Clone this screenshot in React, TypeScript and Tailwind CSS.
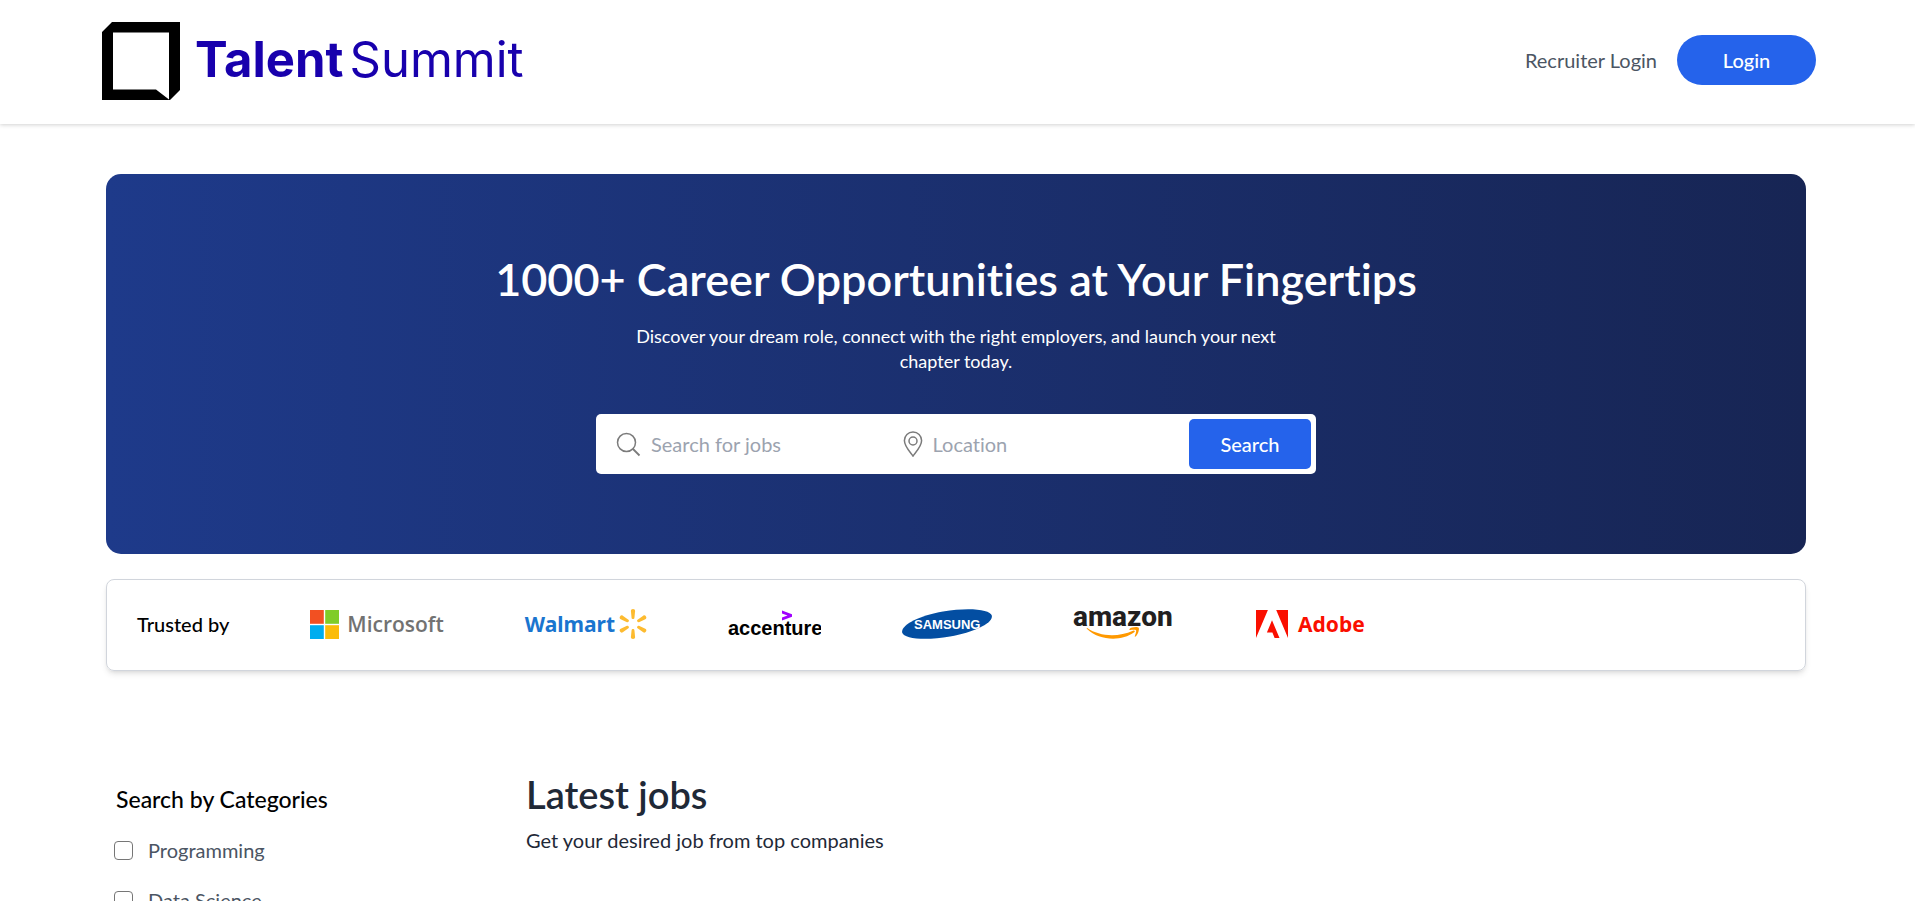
import React from "react";

const categories = ["Programming", "Data Science"];

function BrandMark() {
  return (
    <svg viewBox="0 0 78 78" className="size-[78px] shrink-0" aria-hidden="true">
      <path
        fillRule="evenodd"
        d="M10 0H78V68L68 78H0V10ZM11 10.500V67.500H54L67 77.500V10.500Z"
        fill="#000"
      />
    </svg>
  );
}

function SearchIcon() {
  return (
    <svg viewBox="0 0 25 25" className="size-[25px] shrink-0" fill="none" stroke="#7b7b7b" strokeWidth="1.500" aria-hidden="true">
      <circle cx="10.500" cy="10.500" r="9" />
      <path d="M17 17L23.500 23.500" strokeWidth="1.800" />
    </svg>
  );
}

function PinIcon() {
  return (
    <svg viewBox="0 0 20 26" className="h-[26px] w-5 shrink-0" fill="none" stroke="#7b7b7b" strokeWidth="1.500" aria-hidden="true">
      <path d="M10 25C8.500 22.500 1.400 16 1.400 9.600C1.400 4.600 5.200 1.100 10 1.100S18.600 4.600 18.600 9.600C18.600 16 11.500 22.500 10 25Z" />
      <circle cx="10" cy="10" r="4" />
    </svg>
  );
}

function Microsoft() {
  return (
    <div className="flex items-center gap-2">
      <svg viewBox="0 0 29 29" className="size-[29px]" aria-hidden="true">
        <path d="M0 0H13.800V13.800H0Z" fill="#f25022" />
        <path d="M15.200 0H29V13.800H15.200Z" fill="#80cc28" />
        <path d="M0 15.200H13.800V29H0Z" fill="#00adef" />
        <path d="M15.200 15.200H29V29H15.200Z" fill="#fbbc09" />
      </svg>
      <span className="font-['Open_Sans',sans-serif] text-[21px] leading-7 font-semibold text-[#727272]">Microsoft</span>
    </div>
  );
}

function Walmart() {
  return (
    <div className="flex items-center gap-1">
      <span className="font-['Noto_Sans',sans-serif] text-[21px] leading-7 font-bold text-[#1a75cf]">Walmart</span>
      <svg viewBox="0 0 28 30" className="h-[30px] w-7" fill="#fdbb30" aria-hidden="true">
        {[0, 60, 120, 180, 240, 300].map((angle) => (
          <path
            key={angle}
            d="M14 10C13.200 10 12.700 9.600 12.600 8.900L11.900 2C11.800 .7 12.700 0 14 0S16.200 .7 16.100 2L15.400 8.900C15.300 9.600 14.800 10 14 10Z"
            transform={`rotate(${angle} 14 15)`}
          />
        ))}
      </svg>
    </div>
  );
}

function Accenture() {
  return (
    <svg viewBox="0 0 93 30" className="h-[30px] w-[93px]" role="img" aria-label="accenture">
      <path d="M54 1.500L64 5.200V7.800L54 11.500V8.500L59.500 6.500L54 4.500Z" fill="#a100ff" />
      <text x="0" y="25.500" fontSize="20" className="font-['Liberation_Sans',sans-serif] font-bold">accenture</text>
    </svg>
  );
}

function Samsung() {
  return (
    <svg viewBox="0 0 90 30" className="h-[30px] w-[90px]" role="img" aria-label="Samsung">
      <path d="M.2 23.500C-1.500 16 17 6.500 41 2.400C66 -1.800 88.300 .1 89.800 6.600C91.300 14 72 23.300 48 27.500C24 31.700 1.700 30 .2 23.500Z" fill="#034ea2" />
      <text x="12" y="20" fontSize="13" fill="#fff" className="font-['Liberation_Sans',sans-serif] font-bold">SAMSUNG</text>
    </svg>
  );
}

function Amazon() {
  return (
    <svg viewBox="0 0 98 30" className="h-[30px] w-[98px] overflow-visible" role="img" aria-label="amazon">
      <text x="0" y="17" fontSize="28" fill="#221f1f" className="font-['Roboto','Liberation_Sans',sans-serif] font-extrabold">amazon</text>
      <path d="M14.300 19C26 27.500 45 28.500 60 21.700C61.500 21 62.500 22.200 61.200 23.300C48 33 26 31.500 14.100 20C13.500 19.300 13.700 18.700 14.300 19Z" fill="#f90" />
      <path d="M56.500 19.900C58 18 64.500 17.300 65.700 18.700C66.500 20 65.200 25.500 62.500 27.600C61.900 28 61.500 27.700 61.800 27.100C62.500 25.400 63.600 22 63 21.200S58.700 20.800 57 21C56.400 21 56.100 20.500 56.500 19.900Z" fill="#f90" />
    </svg>
  );
}

function Adobe() {
  return (
    <div className="ml-1 flex items-center gap-2.5">
      <svg viewBox="0 0 32 28" className="h-7 w-8" fill="#fa0f00" aria-hidden="true">
        <path d="M0 0H11.900L0 28ZM20.200 0H32V28ZM16 10.300L23.500 28H18.600L16.400 22.400H10.900Z" />
      </svg>
      <span className="font-['Noto_Sans',sans-serif] text-[21px] leading-7 font-bold text-[#fa0f00]">Adobe</span>
    </div>
  );
}

export default function App() {
  return (
    <div className="h-screen overflow-hidden bg-white font-['Lato',sans-serif] text-black [font-variant-ligatures:none]">
      <header className="flex h-[124px] items-center justify-between px-[99px] pb-1 shadow-[0_1px_4px_rgba(0,0,0,0.18)]">
        <a href="#" className="ml-[3px] flex items-center gap-[15px] pt-0.5 text-[#1800ad]">
          <BrandMark />
          <span className="flex gap-1.5 pb-0.5 font-['Inter',sans-serif] text-[49px] leading-[60px]">
            <span className="font-bold">Talent</span>
            <span className="font-normal">Summit</span>
          </span>
        </a>
        <nav className="flex items-center gap-5 text-xl">
          <a href="#recruiter" className="text-[#4b5563]">Recruiter Login</a>
          <button type="button" className="h-[50px] w-[139px] rounded-full bg-[#2563eb] font-medium text-white">Login</button>
        </nav>
      </header>

      <main className="pt-[50px] pr-[109px] pl-[106px]">
        <section className="flex h-[380px] flex-col items-center rounded-[15px] bg-linear-to-r from-[#1e3a8a] to-[#172554] pt-20 text-white">
          <h1 className="text-[45px] leading-[50px] font-semibold">1000+ Career Opportunities at Your Fingertips</h1>
          <p className="mt-5 max-w-[670px] text-center text-lg leading-[25px]">
            Discover your dream role, connect with the right employers, and launch your next
            <br />
            chapter today.
          </p>
          <form className="mt-10 flex h-[60px] w-[720px] items-center rounded-[5px] bg-white p-[5px] pl-5 text-xl" onSubmit={(e) => e.preventDefault()}>
            <label className="flex flex-1 items-center gap-2.5">
              <SearchIcon />
              <input aria-label="Search for jobs" placeholder="Search for jobs" className="w-full min-w-0 text-black outline-none placeholder:text-[#9ca3af]" />
            </label>
            <label className="flex flex-1 items-center gap-2.5">
              <PinIcon />
              <input aria-label="Location" placeholder="Location" className="w-full min-w-0 text-black outline-none placeholder:text-[#9ca3af]" />
            </label>
            <button type="submit" className="h-[50px] w-[122px] rounded-[5px] bg-[#2563eb] font-medium">Search</button>
          </form>
        </section>

        <section className="mt-[25px] flex h-[92px] items-center gap-[81px] rounded-lg border border-gray-300 px-[30px] pb-0.5 shadow-md">
          <p className="text-xl font-medium whitespace-nowrap">Trusted by</p>
          <Microsoft />
          <Walmart />
          <Accenture />
          <Samsung />
          <Amazon />
          <Adobe />
        </section>

        <div className="mt-[98px] flex">
          <aside className="w-[420px] shrink-0 pt-3.5 pl-2">
            <h2 className="ml-0.5 text-[23px] leading-8 font-medium">Search by Categories</h2>
            <ul className="mt-5 flex flex-col gap-5 text-xl leading-[30px] text-[#4b5563]">
              {categories.map((name) => (
                <li key={name}>
                  <label className="flex items-center gap-[15px]">
                    <input type="checkbox" className="size-[19px] appearance-none rounded-sm border border-[#767676]" />
                    {name}
                  </label>
                </li>
              ))}
            </ul>
          </aside>
          <section className="text-[#1f2937]">
            <h2 className="text-[38px] leading-[50px] font-semibold">Latest jobs</h2>
            <p className="mt-1.5 text-xl leading-[30px]">Get your desired job from top companies</p>
          </section>
        </div>
      </main>
    </div>
  );
}
